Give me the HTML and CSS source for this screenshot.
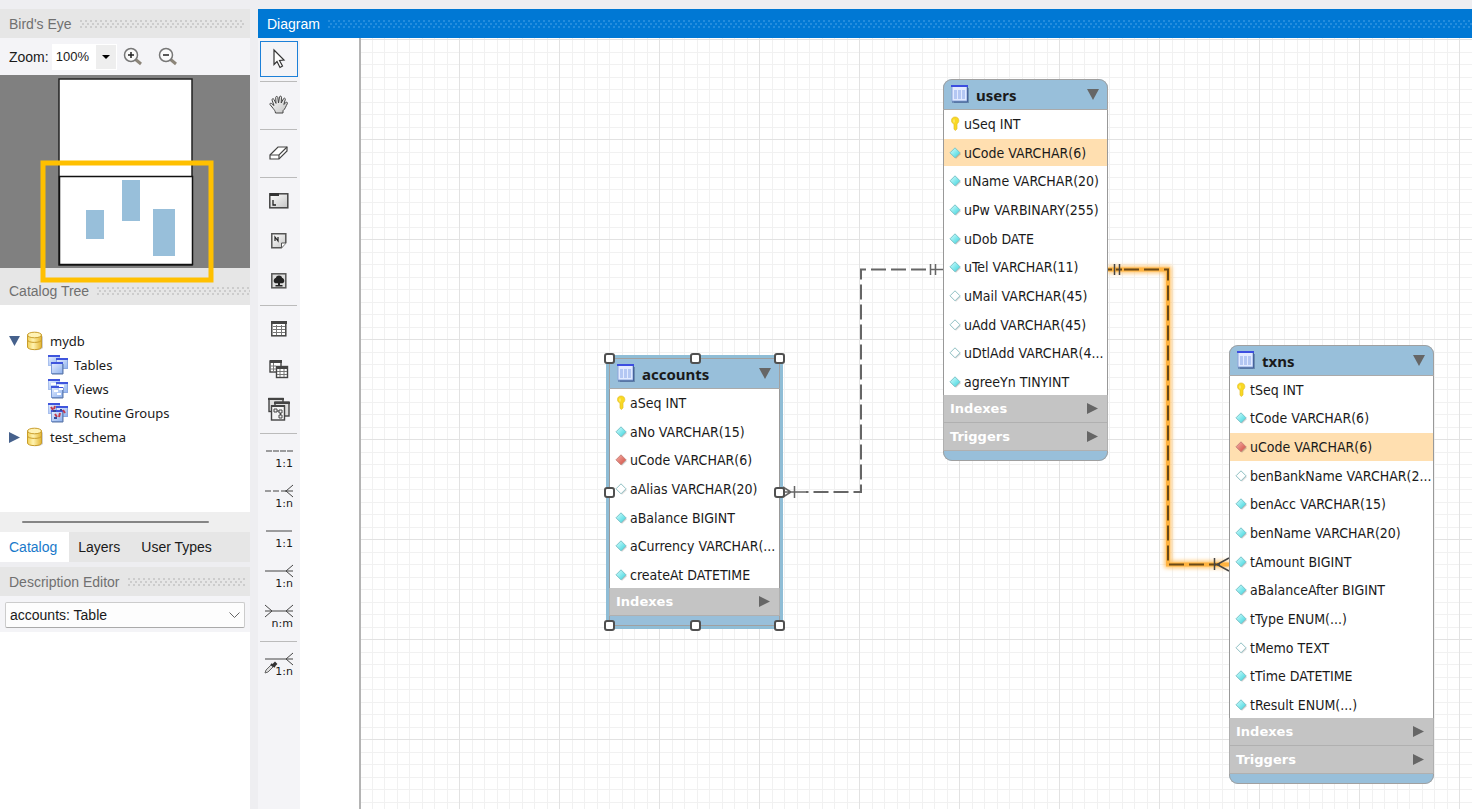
FILE: index.html
```html
<!DOCTYPE html>
<html lang="en">
<head>
    <meta charset="UTF-8">
    <meta name="viewport" content="width=device-width, initial-scale=1.0">
    <title>EER Diagram</title>
    <link rel="stylesheet" href="styles.css">
</head>
<body>
    <!-- Shared icons -->
    <svg class="defs" width="0" height="0" aria-hidden="true">
        <defs>
            <linearGradient id="cyanFill" x1="0" y1="0" x2="1" y2="1">
                <stop offset="0" stop-color="#d8ffff"/>
                <stop offset="1" stop-color="#35d3dc"/>
            </linearGradient>
            <linearGradient id="redFill" x1="0" y1="0" x2="1" y2="1">
                <stop offset="0" stop-color="#f7b5ac"/>
                <stop offset="1" stop-color="#d0473c"/>
            </linearGradient>
            <linearGradient id="dbFill" x1="0" y1="0" x2="1" y2="0">
                <stop offset="0" stop-color="#f0cf55"/>
                <stop offset="0.4" stop-color="#fff3b0"/>
                <stop offset="1" stop-color="#e3b532"/>
            </linearGradient>
            <linearGradient id="blueFill" x1="0" y1="0" x2="1" y2="1">
                <stop offset="0" stop-color="#e4edff"/>
                <stop offset="1" stop-color="#8fb2ee"/>
            </linearGradient>
            <linearGradient id="greyFill" x1="0" y1="0" x2="1" y2="1">
                <stop offset="0" stop-color="#ffffff"/>
                <stop offset="1" stop-color="#c4c4c4"/>
            </linearGradient>
        </defs>
        <symbol id="key" viewBox="0 0 12 16">
            <path d="M6 1c2.500 0 3.800 1.500 3.800 3.600 0 1.600-.8 2.600-1.800 3.200V13l-1.800 1.500L5 13V8C3.500 7.400 2.500 6.400 2.500 4.600 2.500 2.500 3.800 1 6 1z" fill="#f9d923" stroke="#e3bd2a" stroke-width=".7"/>
            <path d="M5 3.500v3" stroke="#fff29a"/>
        </symbol>
        <symbol id="full" viewBox="0 0 12 12">
            <path d="M6.500 2L12 7l-5 4.800L2 7z" fill="#000" opacity=".2"/>
            <path d="M6 .8L11 5.800 6 10.800 1 5.800z" fill="url(#cyanFill)" stroke="#7cc3c8"/>
        </symbol>
        <symbol id="empty" viewBox="0 0 12 12">
            <path d="M6.500 2L12 7l-5 4.800L2 7z" fill="#000" opacity=".15"/>
            <path d="M6 .8L11 5.800 6 10.800 1 5.800z" fill="#fff" stroke="#8fc0c3"/>
        </symbol>
        <symbol id="foreign" viewBox="0 0 12 12">
            <path d="M6.500 2L12 7l-5 4.800L2 7z" fill="#000" opacity=".2"/>
            <path d="M6 .8L11 5.800 6 10.800 1 5.800z" fill="url(#redFill)" stroke="#c9837a"/>
        </symbol>
        <symbol id="grid-icon" viewBox="0 0 18 18">
            <path d="M3 3h15v15H3z" fill="#33507a" opacity=".45"/>
            <rect x="1" y="1" width="15" height="15" fill="#e2eaff" stroke="#8ba6dc"/>
            <path d="M3 5h3v9H3zM7 5h3v9H7zM11 5h3v9h-3z" fill="#b4c7f3"/>
            <path d="M0 0h17v2H0z" fill="#3c4ee0"/>
            <path d="M16.500 2v15H1" fill="none" stroke="#47639c"/>
        </symbol>
        <symbol id="database" viewBox="0 0 18 20">
            <path d="M3 17c3 3 11 3 14 0V6l-2-3z" fill="#000" opacity=".18"/>
            <path d="M1.500 4v12c0 3.500 14 3.500 14 0V4z" fill="url(#dbFill)" stroke="#c99d2b"/>
            <ellipse cx="8.500" cy="4" rx="7" ry="2.800" fill="#fff3b5" stroke="#c99d2b"/>
            <path d="M1.500 9c0 3.200 14 3.200 14 0" fill="none" stroke="#c99d2b"/>
        </symbol>
        <symbol id="stack" viewBox="0 0 20 20">
            <rect x=".5" y="1.500" width="11" height="9" fill="url(#blueFill)" stroke="#a9c0ee"/>
            <path d="M0 0h12v2H0z" fill="#3f55dd"/>
            <rect x="8.500" y="4.500" width="11" height="9" fill="url(#blueFill)" stroke="#8ba8e2"/>
            <path d="M8 3h12v2H8z" fill="#3f55dd"/>
            <rect x="3.500" y="8.500" width="11" height="10" fill="url(#blueFill)" stroke="#7d9cd8"/>
            <path d="M3 7h12v2H3z" fill="#3f55dd"/>
            <path d="M15 9v10H4" fill="none" stroke="#5974a5"/>
        </symbol>
        <symbol id="down" viewBox="0 0 12 11"><path d="M0 0h12L6 11z" fill="currentColor"/></symbol>
        <symbol id="right" viewBox="0 0 11 11"><path d="M0 0l11 5.500L0 11z" fill="currentColor"/></symbol>
    </svg>

    <div class="app">
        <aside class="sidebar">
            <header class="panel-header"><h2>Bird's Eye</h2><span class="grip"></span></header>
            <div class="zoom-bar">
                <label for="zoom">Zoom:</label>
                <div class="zoom-select">
                    <select id="zoom"><option>100%</option><option>150%</option><option>200%</option></select>
                    <span class="zoom-arrow"><svg width="8" height="4" viewBox="0 0 8 4"><path d="M0 0h8L4 4z"/></svg></span>
                </div>
                <button class="zoom-btn" type="button" aria-label="Zoom in">
                    <svg width="20" height="20" viewBox="0 0 20 20" fill="none">
                        <path d="M12 12l6 5" stroke="#8c8579" stroke-width="3"/>
                        <circle cx="8" cy="8" r="6.500" fill="#fafafa" stroke="#777" stroke-width="1.500"/>
                        <path d="M5 8h6M8 5v6" stroke="#222" stroke-width="1.500"/>
                    </svg>
                </button>
                <button class="zoom-btn" type="button" aria-label="Zoom out">
                    <svg width="20" height="20" viewBox="0 0 20 20" fill="none">
                        <path d="M12 12l6 5" stroke="#8c8579" stroke-width="3"/>
                        <circle cx="8" cy="8" r="6.500" fill="#fafafa" stroke="#777" stroke-width="1.500"/>
                        <path d="M5 8h6" stroke="#222" stroke-width="1.500"/>
                    </svg>
                </button>
            </div>
            <div class="birds-eye">
                <svg width="250" height="193" viewBox="0 0 250 193">
                    <rect x="59" y="4" width="133" height="186" fill="#fff" stroke="#222" stroke-width="1.500"/>
                    <rect x="59.500" y="101.500" width="133" height="88" fill="#fff" stroke="#111" stroke-width="1.500"/>
                    <g fill="#98bfda">
                        <rect x="86" y="135" width="18" height="29"/>
                        <rect x="122" y="105" width="18" height="41"/>
                        <rect x="153" y="134" width="22" height="47"/>
                    </g>
                    <rect x="43" y="88" width="168" height="117" fill="none" stroke="#ffc000" stroke-width="5"/>
                </svg>
            </div>

            <header class="panel-header catalog-header"><h2>Catalog Tree</h2><span class="grip"></span></header>
            <ul class="tree">
                <li><svg class="twisty" width="11" height="10"><use href="#down"/></svg><svg width="18" height="20"><use href="#database"/></svg>mydb</li>
                <li class="child"><svg width="20" height="20"><use href="#stack"/></svg>Tables</li>
                <li class="child"><svg width="20" height="20"><use href="#stack"/><path d="M3 5h5M11 7h5M11 10h4M6 12h4M9 15h4" stroke="#fff" stroke-width="2"/></svg>Views</li>
                <li class="child"><svg width="20" height="20"><use href="#stack"/><path d="M3 4l2 3M7 3l-1 3M15 7l2 3M7 11l2 3M12 10l-1 4" stroke="#c23c50" stroke-width="2"/><path d="M5 8h3M12 7h2M6 15h3" stroke="#334b9a" stroke-width="2"/></svg>Routine Groups</li>
                <li><svg class="twisty" width="11" height="11"><use href="#right"/></svg><svg width="18" height="20"><use href="#database"/></svg>test_schema</li>
            </ul>
            <div class="scrollbar"><span></span></div>
            <nav class="tabs">
                <button class="tab active" type="button">Catalog</button>
                <button class="tab" type="button">Layers</button>
                <button class="tab" type="button">User Types</button>
            </nav>

            <header class="panel-header"><h2>Description Editor</h2><span class="grip"></span></header>
            <div class="object-bar">
                <select id="object" aria-label="Object"><option>accounts: Table</option></select>
                <svg width="11" height="6" viewBox="0 0 11 6" fill="none" stroke="#666"><path d="M.5.5l5 5 5-5"/></svg>
            </div>
            <div class="description"></div>
        </aside>

        <main class="workspace">
            <header class="panel-header diagram-header"><h1>Diagram</h1><span class="grip"></span></header>
            <div class="editor">
                <div class="toolbox">
                    <button class="tool selected" type="button" aria-label="Select">
                        <svg width="20" height="20" viewBox="0 0 20 20"><path d="M5 1l10 10-4.500.5 3 5.500-2.500 1.500-3-6L5 15.500z" fill="#fff" stroke="#333" stroke-width="1.200"/></svg>
                    </button>
                    <hr>
                    <button class="tool" type="button" aria-label="Hand">
                        <svg width="20" height="20" viewBox="0 0 20 20"><path d="M6.500 18c-.2-2-1.200-3-2.300-4.500L1 9.500c-.6-1 .8-1.700 1.600-1L5 10.500 3 5c-.3-1.200 1.400-1.800 2-.6l2 4L6.700 2.500c0-1.400 1.900-1.400 2.100 0L9.500 8l1-6c.2-1.300 2-1.100 2 .2L12.200 8l2.300-4.300c.6-1.100 2.200-.4 1.800.8L14.800 9.500l2.100-2c1-.8 2 .2 1.400 1.200-1.300 2-2 5.300-4.300 7v2.300z" fill="url(#greyFill)" stroke="#444"/></svg>
                    </button>
                    <hr>
                    <button class="tool" type="button" aria-label="Eraser">
                        <svg width="20" height="20" viewBox="0 0 20 20"><path d="M1 12L9 4h9v4l-8 8H1z" fill="#fff" stroke="#444" stroke-width="1.200"/><path d="M1 12h9l8-8M10 12v4" fill="none" stroke="#444" stroke-width="1.200"/></svg>
                    </button>
                    <hr>
                    <button class="tool" type="button" aria-label="Layer">
                        <svg width="20" height="16" viewBox="0 0 20 16"><rect x=".8" y=".8" width="18" height="14" fill="url(#greyFill)" stroke="#444" stroke-width="1.500"/><path d="M1 0h9v3H1z" fill="#333"/><path d="M4 7v5h3" fill="none" stroke="#222" stroke-width="1.300"/></svg>
                    </button>
                    <button class="tool" type="button" aria-label="Note">
                        <svg width="16" height="16" viewBox="0 0 16 16"><path d="M.8.8h14v9l-4.500 5H.8z" fill="url(#greyFill)" stroke="#555" stroke-width="1.500"/><path d="M10.500 14.500V10H15" fill="#fff" stroke="#555"/><path d="M4 8V4l3 4V4" fill="none" stroke="#222" stroke-width="1.200"/></svg>
                    </button>
                    <button class="tool" type="button" aria-label="Image">
                        <svg width="16" height="16" viewBox="0 0 16 16"><rect x=".8" y=".8" width="14" height="14" fill="#ddd" stroke="#555" stroke-width="1.500"/><path d="M8 2.500c2 0 2.800 1 3 2.200 1.500.3 2.300 1.800 2.300 3.300s-1.500 2.500-3.300 2.300H9V12h2.500v1.500h-7V12H7v-1.700H5.500C4 10.300 2.700 9.500 2.700 8S3.500 5 5 4.700C5.200 3.500 6 2.500 8 2.500z" fill="#222"/></svg>
                    </button>
                    <hr>
                    <button class="tool" type="button" aria-label="Table">
                        <svg width="16" height="16" viewBox="0 0 16 16"><rect x=".8" y=".8" width="14" height="14" fill="#fff" stroke="#444" stroke-width="1.500"/><path d="M0 0h16v3H0z" fill="#444"/><path d="M2 5.500h12M2 8.500h12M2 11.500h12M5.500 4v10M10.500 4v10" stroke="#777"/></svg>
                    </button>
                    <button class="tool" type="button" aria-label="View">
                        <svg width="20" height="18" viewBox="0 0 20 18"><g fill="#fff" stroke="#444" stroke-width="1.400"><rect x="1" y="1" width="11" height="11"/><rect x="7.500" y="6.500" width="11" height="11"/></g><path d="M1 0h12v3H1zM7 6h12v3H7z" fill="#444"/><path d="M2 6h5M2 9h5M4.500 3v8M8 11.500h10M8 14.500h10M11 9v8M15 9v8" stroke="#777"/></svg>
                    </button>
                    <button class="tool" type="button" aria-label="Routine group">
                        <svg width="24" height="24" viewBox="0 0 24 24"><g fill="#ddd" stroke="#444" stroke-width="1.400"><rect x="2" y="1.500" width="14" height="13"/><rect x="8" y="5" width="14" height="14"/><rect x="4.500" y="9" width="13" height="14" fill="#f4f4f4"/></g><path d="M1 1h16v2H1zM7 5h16v2H7zM4 8h14v2H4z" fill="#444"/><path d="M7 12h3v3H7zM12 13h3v3h-3zM10 14h2M12 18h3v3h-3zM13.500 16v2" fill="none" stroke="#444"/></svg>
                    </button>
                    <hr>
                    <button class="tool relation" type="button">
                        <svg width="28" height="12" viewBox="0 0 28 12"><path d="M1 6h27" stroke-dasharray="6 1"/></svg><span>1:1</span>
                    </button>
                    <button class="tool relation" type="button">
                        <svg width="28" height="12" viewBox="0 0 28 12"><path d="M0 6h22" stroke-dasharray="6 2"/><path d="M20 6h8M28 0l-7 6 7 6"/></svg><span>1:n</span>
                    </button>
                    <button class="tool relation" type="button">
                        <svg width="28" height="12" viewBox="0 0 28 12"><path d="M1 6h26"/></svg><span>1:1</span>
                    </button>
                    <button class="tool relation" type="button">
                        <svg width="28" height="12" viewBox="0 0 28 12"><path d="M0 6h28M28 0l-7 6 7 6"/></svg><span>1:n</span>
                    </button>
                    <button class="tool relation" type="button">
                        <svg width="28" height="12" viewBox="0 0 28 12"><path d="M0 6h28M28 0l-7 6 7 6M0 0l7 6-7 6"/></svg><span>n:m</span>
                    </button>
                    <hr>
                    <button class="tool relation" type="button">
                        <svg width="28" height="12" viewBox="0 0 28 12"><path d="M0 6h28M28 0l-7 6 7 6"/><path d="M0 20l1-3 5-5 2 2-5 5z" fill="#ddd" stroke="#666"/><path d="M6 11l4 3M8 12l2-2 1 1-2 2z" stroke="#333" stroke-width="2"/></svg><span>1:n</span>
                    </button>
                </div>

                <div class="canvas">
                    <div class="page">
                        <svg class="lines" width="100%" height="100%">
                            <defs>
                                <pattern id="grid" width="100" height="100" y="1" patternUnits="userSpaceOnUse">
                                    <path d="M13 0h1v100h-1zM25 0h1v100h-1zM38 0h1v100h-1zM50 0h1v100h-1zM63 0h1v100h-1zM75 0h1v100h-1zM88 0h1v100h-1zM0 13h100v1H0zM0 25h100v1H0zM0 38h100v1H0zM0 50h100v1H0zM0 63h100v1H0zM0 75h100v1H0zM0 88h100v1H0z" fill="#f1f1f1"/>
                                    <path d="M0 0h1v100H0zM0 0h100v1H0z" fill="#e2e2e2"/>
                                </pattern>
                                <filter id="glow" x="-20%" y="-20%" width="140%" height="140%"><feGaussianBlur stdDeviation="2"/></filter>
                            </defs>
                            <rect width="100%" height="100%" fill="url(#grid)"/>
                            <rect width="2" height="100%" fill="#b4b4b4"/>
                            <!-- accounts to users -->
                            <g fill="none" stroke="#666" stroke-width="2">
                                <path d="M567 231.500H502V454H447" stroke-dasharray="15 5"/>
                                <path d="M571 231.500H584M571.500 226v11M576.500 226v11M421 454H447M435.500 448v12M424 449l8 5-8 5" stroke-width="1.500"/>
                            </g>
                            <!-- users to txns -->
                            <path d="M749 231.500H809V526.500H870" fill="none" stroke="#ffc266" stroke-width="7" filter="url(#glow)"/>
                            <path d="M749 231.500H809V526.500H870" fill="none" stroke="#ffb340" stroke-width="4"/>
                            <g fill="none" stroke="#6b4a18" stroke-width="2">
                                <path d="M765 231.500H809V526.500H857" stroke-dasharray="15 5"/>
                                <path d="M749 231.500h4M757 231.500h6M855 526.500h6"/>
                                <path d="M755.500 226v11M760.500 226v11M855.500 520v12M870 520l-12 6.500 12 6.500" stroke="#444" stroke-width="1.500"/>
                            </g>
                        </svg>

                        <section class="entity accounts">
                            <header><svg width="18" height="18"><use href="#grid-icon"/></svg><h3>accounts</h3><button type="button" aria-label="Collapse"><svg width="12" height="11"><use href="#down"/></svg></button></header>
                            <ul class="columns">
                                <li><svg width="12" height="16"><use href="#key"/></svg>aSeq INT</li>
                                <li><svg width="12" height="12"><use href="#full"/></svg>aNo VARCHAR(15)</li>
                                <li><svg width="12" height="12"><use href="#foreign"/></svg>uCode VARCHAR(6)</li>
                                <li><svg width="12" height="12"><use href="#empty"/></svg>aAlias VARCHAR(20)</li>
                                <li><svg width="12" height="12"><use href="#full"/></svg>aBalance BIGINT</li>
                                <li><svg width="12" height="12"><use href="#full"/></svg>aCurrency VARCHAR(...</li>
                                <li><svg width="12" height="12"><use href="#full"/></svg>createAt DATETIME</li>
                            </ul>
                            <button class="group" type="button">Indexes<svg width="11" height="11"><use href="#right"/></svg></button>
                            <i class="handle top left"></i><i class="handle top middle"></i><i class="handle top right"></i>
                            <i class="handle center left"></i><i class="handle center right"></i>
                            <i class="handle bottom left"></i><i class="handle bottom middle"></i><i class="handle bottom right"></i>
                        </section>

                        <section class="entity users">
                            <header><svg width="18" height="18"><use href="#grid-icon"/></svg><h3>users</h3><button type="button" aria-label="Collapse"><svg width="12" height="11"><use href="#down"/></svg></button></header>
                            <ul class="columns">
                                <li><svg width="12" height="16"><use href="#key"/></svg>uSeq INT</li>
                                <li class="linked"><svg width="12" height="12"><use href="#full"/></svg>uCode VARCHAR(6)</li>
                                <li><svg width="12" height="12"><use href="#full"/></svg>uName VARCHAR(20)</li>
                                <li><svg width="12" height="12"><use href="#full"/></svg>uPw VARBINARY(255)</li>
                                <li><svg width="12" height="12"><use href="#full"/></svg>uDob DATE</li>
                                <li><svg width="12" height="12"><use href="#full"/></svg>uTel VARCHAR(11)</li>
                                <li><svg width="12" height="12"><use href="#empty"/></svg>uMail VARCHAR(45)</li>
                                <li><svg width="12" height="12"><use href="#empty"/></svg>uAdd VARCHAR(45)</li>
                                <li><svg width="12" height="12"><use href="#empty"/></svg>uDtlAdd VARCHAR(4...</li>
                                <li><svg width="12" height="12"><use href="#full"/></svg>agreeYn TINYINT</li>
                            </ul>
                            <button class="group" type="button">Indexes<svg width="11" height="11"><use href="#right"/></svg></button>
                            <button class="group" type="button">Triggers<svg width="11" height="11"><use href="#right"/></svg></button>
                        </section>

                        <section class="entity txns">
                            <header><svg width="18" height="18"><use href="#grid-icon"/></svg><h3>txns</h3><button type="button" aria-label="Collapse"><svg width="12" height="11"><use href="#down"/></svg></button></header>
                            <ul class="columns">
                                <li><svg width="12" height="16"><use href="#key"/></svg>tSeq INT</li>
                                <li><svg width="12" height="12"><use href="#full"/></svg>tCode VARCHAR(6)</li>
                                <li class="linked"><svg width="12" height="12"><use href="#foreign"/></svg>uCode VARCHAR(6)</li>
                                <li><svg width="12" height="12"><use href="#empty"/></svg>benBankName VARCHAR(2...</li>
                                <li><svg width="12" height="12"><use href="#full"/></svg>benAcc VARCHAR(15)</li>
                                <li><svg width="12" height="12"><use href="#full"/></svg>benName VARCHAR(20)</li>
                                <li><svg width="12" height="12"><use href="#full"/></svg>tAmount BIGINT</li>
                                <li><svg width="12" height="12"><use href="#full"/></svg>aBalanceAfter BIGINT</li>
                                <li><svg width="12" height="12"><use href="#full"/></svg>tType ENUM(...)</li>
                                <li><svg width="12" height="12"><use href="#empty"/></svg>tMemo TEXT</li>
                                <li><svg width="12" height="12"><use href="#full"/></svg>tTime DATETIME</li>
                                <li><svg width="12" height="12"><use href="#full"/></svg>tResult ENUM(...)</li>
                            </ul>
                            <button class="group" type="button">Indexes<svg width="11" height="11"><use href="#right"/></svg></button>
                            <button class="group" type="button">Triggers<svg width="11" height="11"><use href="#right"/></svg></button>
                        </section>
                    </div>
                </div>
            </div>
        </main>
    </div>
</body>
</html>
```
FILE: styles.css
```css
* {
    box-sizing: border-box;
}

body {
    margin: 0;
    background: #eeeef1;
    color: #1a1a1a;
    font: 14px "Liberation Sans", Arial, sans-serif;
}

h1, h2, h3, ul {
    margin: 0;
    padding: 0;
    font-size: 14px;
    font-weight: normal;
    list-style: none;
}

button, select {
    margin: 0;
    padding: 0;
    border: none;
    background: none;
    color: inherit;
    font: inherit;
}

svg {
    display: block;
    flex-shrink: 0;
    overflow: visible;
}

.defs {
    position: absolute;
}

.app {
    display: grid;
    grid-template-columns: 250px 1fr;
    gap: 8px;
    height: 100vh;
    padding-top: 9px;
    overflow: hidden;
}

/* Panels */
.panel-header {
    display: flex;
    flex-shrink: 0;
    align-items: center;
    gap: 8px;
    height: 29px;
    padding: 0 5px 0 9px;
    background: #e6e6e6;
    color: #707070;
}

.grip {
    flex: 1;
    height: 8px;
    background-image:
        radial-gradient(circle at 1px 1px, #909090 0, transparent 1px),
        radial-gradient(circle at 1px 1px, #909090 0, transparent 1px);
    background-size: 5px 6px;
    background-position: 0 0, 2px 3px;
}

.sidebar {
    display: flex;
    flex-direction: column;
    min-height: 0;
}

.zoom-bar {
    display: flex;
    align-items: center;
    height: 37px;
    padding-left: 9px;
    background: #f4f4f7;
}

.zoom-select {
    display: grid;
    grid-template-columns: 44px 20px;
    height: 26px;
    margin: 0 6px 0 3px;
    padding-right: 1px;
    background: #fff;
}

.zoom-select select {
    grid-area: 1 / 1 / 2 / 3;
    padding-left: 4px;
    appearance: none;
    font-size: 13px;
}

.zoom-arrow {
    display: grid;
    grid-area: 1 / 2;
    place-items: center;
    margin: 1px 0;
    background: #eee;
    pointer-events: none;
}

.zoom-btn {
    margin-right: 15px;
}

.birds-eye {
    position: relative;
    z-index: 1;
    height: 193px;
    background: #808080;
}

.catalog-header {
    height: 37px;
    padding: 8px 0 0 9px;
}

.tree {
    height: 207px;
    padding: 24px 0 0 9px;
    background: #fff;
    font: 13px "Noto Sans", sans-serif;
}

.tree li {
    display: flex;
    align-items: center;
    gap: 6px;
    height: 24px;
}

.tree .child {
    padding-left: 39px;
}

.twisty {
    color: #46618c;
}

.scrollbar {
    height: 20px;
    padding: 9px 41px 0 22px;
    background: #efefef;
}

.scrollbar span {
    display: block;
    height: 2px;
    border-radius: 1px;
    background: #858585;
}

.tabs {
    display: flex;
    height: 30px;
    margin-bottom: 5px;
    background: #e6e6e6;
}

.tab {
    padding: 0 12px 0 9px;
}

.tab.active {
    background: #fff;
    color: #1979ca;
}

.object-bar {
    display: grid;
    align-items: center;
    height: 36px;
    padding: 2px 5px 0;
    background: #f4f4f7;
}

.object-bar select {
    grid-area: 1 / 1;
    height: 26px;
    padding-left: 4px;
    border: 1px solid #ccc;
    border-bottom-color: #aaa;
    border-radius: 2px;
    background: #fdfdfd;
    appearance: none;
}

.object-bar svg {
    grid-area: 1 / 1;
    justify-self: end;
    margin-right: 5px;
    pointer-events: none;
}

.description {
    flex: 1;
    background: #fff;
}

/* Diagram editor */
.workspace {
    display: flex;
    flex-direction: column;
    min-width: 0;
    min-height: 0;
}

.diagram-header {
    padding-right: 0;
    background: #0078d4;
    color: #fff;
}

.diagram-header .grip {
    background-image:
        radial-gradient(circle at 1px 1px, #7cc0f5 0, transparent 1px),
        radial-gradient(circle at 1px 1px, #7cc0f5 0, transparent 1px);
}

.editor {
    display: flex;
    flex: 1;
    min-height: 0;
}

.toolbox {
    width: 42px;
    padding: 1px 2px 0;
    background: #f4f4f7;
}

.toolbox hr {
    height: 1px;
    margin: 4px 1px 3px 0;
    border: none;
    background: #bbb;
}

.tool {
    display: flex;
    align-items: center;
    justify-content: center;
    width: 38px;
    height: 40px;
}

.tool.selected {
    height: 36px;
    margin: 2px 0;
    border: 1px solid #1c80d8;
}

.relation {
    flex-direction: column;
    align-items: flex-end;
    justify-content: flex-start;
    padding: 8px 5px 0;
    font: 11px/11px "DejaVu Sans", sans-serif;
}

.relation svg {
    fill: none;
    stroke: #444;
}

.relation span {
    padding-top: 1px;
}

.canvas {
    flex: 1;
    min-width: 0;
    padding-left: 59px;
    overflow: hidden;
    background: #fff;
}

.page {
    position: relative;
    height: 100%;
}

.lines {
    position: absolute;
    inset: 0;
    overflow: hidden;
}

.entity {
    position: absolute;
    display: flex;
    flex-direction: column;
    padding-bottom: 10px;
    border-radius: 9px;
    background: #98bfda;
    font: 14px "DejaVu Sans Condensed", "Noto Sans", sans-serif;
    box-shadow: inset 0 0 0 1px #a0a0a0;
}

.entity header {
    display: flex;
    align-items: center;
    height: 31px;
    padding: 0 9px 0 8px;
    border-bottom: 1px solid #aaa;
}

.entity h3 {
    flex: 1;
    padding: 1px 0 0 7px;
    font: bold 15px "Noto Sans", sans-serif;
}

.entity header button, .group svg {
    color: #666;
}

.columns {
    display: grid;
    flex: 1;
    grid-template-columns: minmax(0, 1fr);
    grid-auto-rows: 1fr;
    margin: 0 1px -2px;
    background: #fff;
    box-shadow: 0 0 0 1px #999;
    clip-path: inset(0 -1px);
}

.columns li {
    display: flex;
    align-items: center;
    gap: 3px;
    padding-left: 5px;
    border-bottom: 1px solid transparent;
    background-clip: padding-box;
    white-space: nowrap;
}

.columns .linked {
    background-color: #ffdfb0;
}

.group {
    display: flex;
    position: relative;
    align-items: center;
    justify-content: space-between;
    height: 28px;
    padding: 0 9px 0 6px;
    border: 1px solid #b0b0b0;
    border-top: none;
    background: #c4c4c4;
    color: #fff;
    font: bold 13px "DejaVu Sans", sans-serif;
}

.accounts {
    left: 250px;
    top: 320px;
    width: 171px;
    height: 268px;
    border-radius: 0;
    outline: 3px solid #8fbdd6;
}

.users {
    left: 584px;
    top: 41px;
    width: 165px;
    height: 382px;
}

.txns {
    left: 870px;
    top: 307px;
    width: 205px;
    height: 439px;
}

/* Resize handles of the selected table */
.handle {
    position: absolute;
    width: 11px;
    height: 11px;
    margin: -5px;
    border: 2px solid #505050;
    border-radius: 3px;
    background: #fff;
}

.handle.top { top: 0; }
.handle.center { top: 50%; }
.handle.bottom { bottom: 0; }
.handle.left { left: 0; }
.handle.middle { left: 50%; }
.handle.right { right: 0; }
```
